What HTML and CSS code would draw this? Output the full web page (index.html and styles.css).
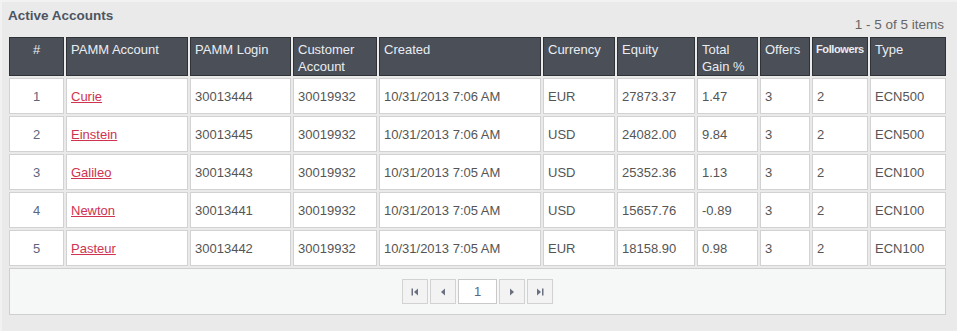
FILE: index.html
```html
<!DOCTYPE html>
<html>
<head>
<meta charset="utf-8">
<link rel="stylesheet" href="styles.css">
</head>
<body>
<div class="panel">
  <div class="panel-head">
    <div class="title">Active Accounts</div>
    <div class="count">1 - 5 of 5 items</div>
  </div>
  <table class="grid">
    <colgroup>
      <col style="width:55px"><col style="width:122px"><col style="width:101px"><col style="width:84px"><col style="width:162px"><col style="width:72px"><col style="width:78px"><col style="width:61px"><col style="width:50px"><col style="width:56px"><col style="width:76px">
    </colgroup>
    <thead>
      <tr>
        <th class="c">#</th><th>PAMM Account</th><th>PAMM Login</th><th>Customer Account</th><th>Created</th><th>Currency</th><th>Equity</th><th>Total Gain %</th><th>Offers</th><th class="small">Followers</th><th>Type</th>
      </tr>
    </thead>
    <tbody>
      <tr><td class="c num">1</td><td><a href="#">Curie</a></td><td>30013444</td><td>30019932</td><td>10/31/2013 7:06 AM</td><td>EUR</td><td>27873.37</td><td>1.47</td><td>3</td><td>2</td><td>ECN500</td></tr>
      <tr><td class="c num">2</td><td><a href="#">Einstein</a></td><td>30013445</td><td>30019932</td><td>10/31/2013 7:06 AM</td><td>USD</td><td>24082.00</td><td>9.84</td><td>3</td><td>2</td><td>ECN500</td></tr>
      <tr><td class="c num">3</td><td><a href="#">Galileo</a></td><td>30013443</td><td>30019932</td><td>10/31/2013 7:05 AM</td><td>USD</td><td>25352.36</td><td>1.13</td><td>3</td><td>2</td><td>ECN100</td></tr>
      <tr><td class="c num">4</td><td><a href="#">Newton</a></td><td>30013441</td><td>30019932</td><td>10/31/2013 7:05 AM</td><td>USD</td><td>15657.76</td><td>-0.89</td><td>3</td><td>2</td><td>ECN100</td></tr>
      <tr><td class="c num">5</td><td><a href="#">Pasteur</a></td><td>30013442</td><td>30019932</td><td>10/31/2013 7:05 AM</td><td>EUR</td><td>18158.90</td><td>0.98</td><td>3</td><td>2</td><td>ECN100</td></tr>
    </tbody>
    <tfoot>
      <tr>
        <td colspan="11" class="pager-cell">
          <div class="pager">
            <span class="pbtn"><svg width="8" height="8" viewBox="0 0 8 8"><rect x="0.5" y="0.5" width="1.5" height="7" fill="#6a7080"/><polygon points="7,0.5 3,4 7,7.5" fill="#6a7080"/></svg></span>
            <span class="pbtn"><svg width="8" height="8" viewBox="0 0 8 8"><polygon points="6,0.5 2,4 6,7.5" fill="#6a7080"/></svg></span>
            <span class="page">1</span>
            <span class="pbtn"><svg width="8" height="8" viewBox="0 0 8 8"><polygon points="2,0.5 6,4 2,7.5" fill="#6a7080"/></svg></span>
            <span class="pbtn"><svg width="8" height="8" viewBox="0 0 8 8"><polygon points="1,0.5 5,4 1,7.5" fill="#6a7080"/><rect x="6" y="0.5" width="1.5" height="7" fill="#6a7080"/></svg></span>
          </div>
        </td>
      </tr>
    </tfoot>
  </table>
</div>
</body>
</html>
```
FILE: styles.css
```css
html, body {
  margin: 0;
  padding: 0;
  background: #eaeaea;
}
body {
  font-family: "Liberation Sans", Arial, sans-serif;
  font-size: 13px;
  color: #555;
}
.panel {
  width: 957px;
  height: 331px;
  box-sizing: border-box;
  border-top: 2px solid #f2f2f2;
  border-left: 2px solid #f2f2f2;
  background: #eaeaea;
}
.panel-head {
  display: flex;
  justify-content: space-between;
  height: 33px;
  padding: 0 13px 0 6px;
}
.title {
  padding-top: 6px;
  font-size: 13.5px;
  line-height: 16px;
  font-weight: bold;
  color: #4d5462;
}
.count {
  align-self: flex-end;
  font-size: 13.5px;
  line-height: 16px;
  padding-bottom: 2px;
  color: #666;
}
.grid {
  margin-left: 5px;
  table-layout: fixed;
  width: 941px;
  border-collapse: separate;
  border-spacing: 2px;
}
.grid th {
  height: 39px;
  box-sizing: border-box;
  background: #4b4f57;
  border: 1px solid #2f3237;
  color: #e9edf2;
  font-weight: normal;
  text-align: left;
  vertical-align: top;
  padding: 3px 4px 0 4px;
  line-height: 17px;
  font-size: 13px;
}
.grid th.c, .grid td.c { text-align: center; }
.grid th.small {
  font-size: 11px;
  font-weight: bold;
  letter-spacing: -0.4px;
  padding-left: 3px;
  padding-right: 0;
}
.grid td {
  height: 36px;
  box-sizing: border-box;
  background: #fff;
  border: 1px solid #d2d2d2;
  padding: 0 4px;
  vertical-align: middle;
  white-space: nowrap;
  color: #555;
  font-size: 13px;
}
.grid td.num { color: #5d6680; }
.grid a {
  color: #cf3350;
  text-decoration: underline;
}
.grid td.pager-cell {
  height: 47px;
  background: #f6f7f7;
  border: 1px solid #cfcfcf;
  padding: 0;
}
.pager {
  display: flex;
  justify-content: center;
  gap: 2px;
}
.pbtn {
  width: 26px;
  height: 25px;
  box-sizing: border-box;
  border: 1px solid #d2d2d2;
  background: #f3f3f3;
  display: flex;
  align-items: center;
  justify-content: center;
}
.page {
  width: 39px;
  height: 25px;
  box-sizing: border-box;
  border: 1px solid #c9c9c9;
  background: #fff;
  display: flex;
  align-items: center;
  justify-content: center;
  color: #5d6680;
  font-size: 13px;
}
```
